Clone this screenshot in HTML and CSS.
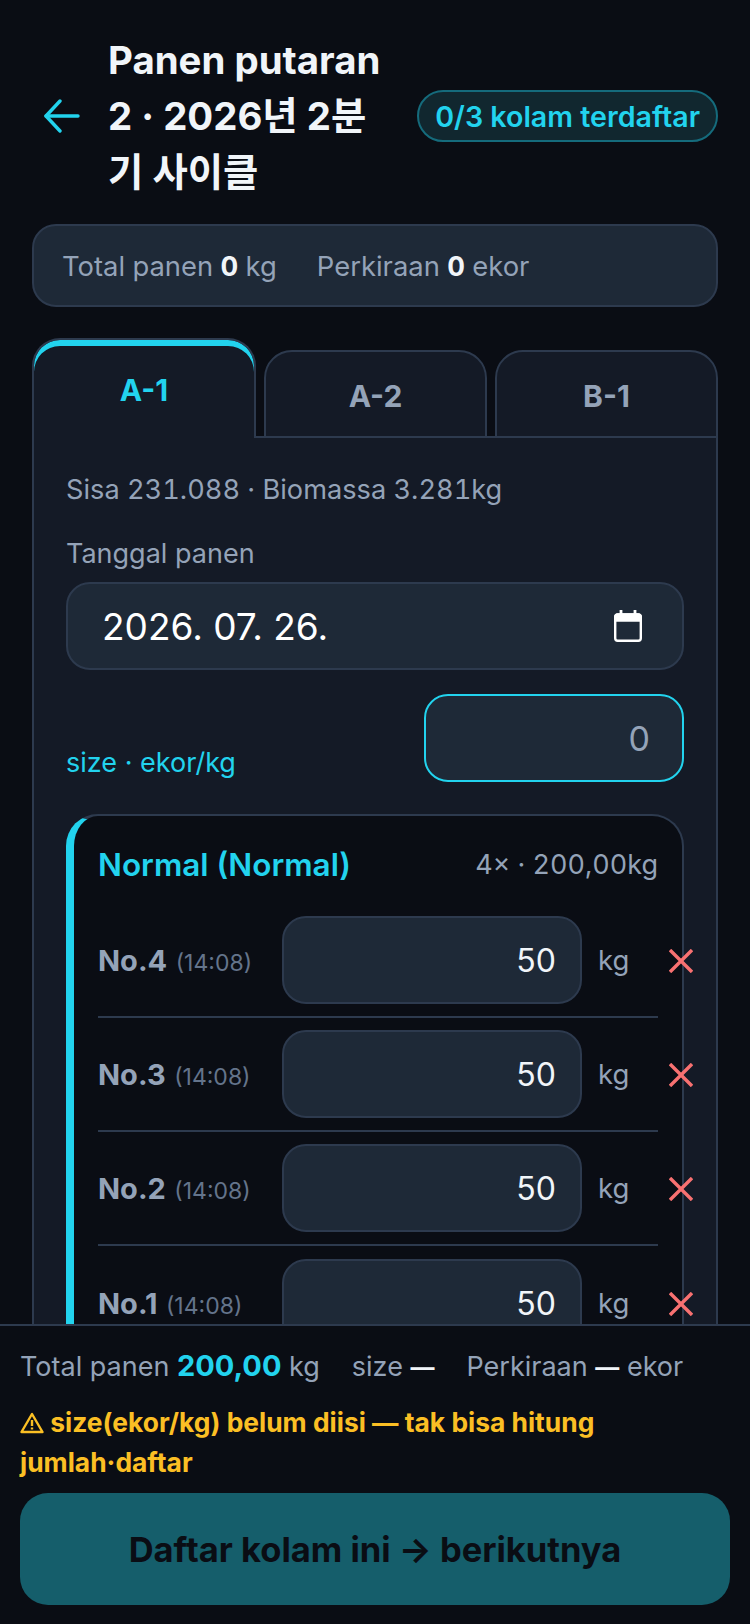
FILE: index.html
```html
<!DOCTYPE html>
<html lang="id">
<head>
    <meta charset="UTF-8">
    <meta name="viewport" content="width=device-width, initial-scale=1.0">
    <title>Panen putaran</title>
    <link rel="stylesheet" href="styles.css">
</head>
<body>
    <main class="content">
        <header class="top">
            <svg class="back" viewBox="0 0 36 36" width="36" height="36" fill="none" stroke="#22d3ee" stroke-width="3.4" stroke-linecap="round" stroke-linejoin="round">
                <path d="M34 18H2"/>
                <path d="M16 3 2 18l14 15"/>
            </svg>
            <h1>Panen putaran 2 · 2026년 2분기 사이클</h1>
            <span class="badge">0/3 kolam terdaftar</span>
        </header>

        <div class="summary">
            <span>Total panen <b>0</b> kg</span>
            <span>Perkiraan <b>0</b> ekor</span>
        </div>

        <div class="tabs">
            <div class="tab active">A-1</div>
            <div class="tab">A-2</div>
            <div class="tab">B-1</div>
        </div>

        <section class="panel">
            <p class="stock">Sisa 231.088 · Biomassa 3.281kg</p>
            <label class="date-label">Tanggal panen</label>
            <div class="field date-field">
                <span>2026. 07. 26.</span>
                <svg viewBox="0 0 28 32" width="28" height="32" fill="none">
                    <rect x="1.2" y="4.5" width="25.6" height="26.3" rx="2.5" stroke="#fff" stroke-width="2.4"/>
                    <path d="M1.2 7a2.500 2.500 0 0 1 2.500-2.500h20.600A2.500 2.500 0 0 1 26.800 7v3.500H1.200z" fill="#fff" stroke="#fff" stroke-width="2.400"/>
                    <path d="M7 0v5M21 0v5" stroke="#fff" stroke-width="2.800"/>
                </svg>
            </div>

            <div class="size-row">
                <label>size · ekor/kg</label>
                <div class="field size-field">0</div>
            </div>

            <div class="group">
                <div class="group-head">
                    <span class="group-name">Normal (Normal)</span>
                    <span class="group-total">4× · 200,00kg</span>
                </div>

                <div class="row">
                    <span class="row-name"><b>No.4</b> <small>(14:08)</small></span>
                    <div class="field kg-field">50</div>
                    <span class="unit">kg</span>
                    <svg class="del" viewBox="0 0 24 24" width="24" height="24" stroke="#f87171" stroke-width="3.4"><path d="M1 1l22 22M23 1 1 23"/></svg>
                </div>
                <div class="row">
                    <span class="row-name"><b>No.3</b> <small>(14:08)</small></span>
                    <div class="field kg-field">50</div>
                    <span class="unit">kg</span>
                    <svg class="del" viewBox="0 0 24 24" width="24" height="24" stroke="#f87171" stroke-width="3.4"><path d="M1 1l22 22M23 1 1 23"/></svg>
                </div>
                <div class="row">
                    <span class="row-name"><b>No.2</b> <small>(14:08)</small></span>
                    <div class="field kg-field">50</div>
                    <span class="unit">kg</span>
                    <svg class="del" viewBox="0 0 24 24" width="24" height="24" stroke="#f87171" stroke-width="3.4"><path d="M1 1l22 22M23 1 1 23"/></svg>
                </div>
                <div class="row">
                    <span class="row-name"><b>No.1</b> <small>(14:08)</small></span>
                    <div class="field kg-field">50</div>
                    <span class="unit">kg</span>
                    <svg class="del" viewBox="0 0 24 24" width="24" height="24" stroke="#f87171" stroke-width="3.4"><path d="M1 1l22 22M23 1 1 23"/></svg>
                </div>
            </div>
        </section>
    </main>

    <footer class="bottom">
        <div class="totals">
            <span>Total panen <b class="cyan">200,00</b> kg</span>
            <span>size <b>—</b></span>
            <span>Perkiraan <b>—</b> ekor</span>
        </div>
        <p class="warn">
            <svg viewBox="0 0 24 22" width="24" height="22" fill="none" stroke="#fbbf24" stroke-width="2.4" stroke-linejoin="round"><path d="M12 2 1.500 20h21z"/><path d="M12 8v6M12 15.500v2"/></svg>
            size(ekor/kg) belum diisi — tak bisa hitung jumlah·daftar
        </p>
        <button class="submit">Daftar kolam ini → berikutnya</button>
    </footer>
</body>
</html>
```

FILE: styles.css
```css
* {
    box-sizing: border-box;
}

html, body {
    height: 100%;
}

body {
    margin: 0;
    height: 1624px;
    display: flex;
    flex-direction: column;
    overflow: hidden;
    background-color: #0a0d14;
    color: #f1f5f9;
    font-family: Inter, "Noto Sans CJK KR", sans-serif;
}

.content {
    flex: 1;
    min-height: 0;
    overflow: hidden;
    padding: 32px 32px 0;
}

.top {
    display: flex;
    align-items: center;
}

.back {
    flex: none;
    margin-left: 12px;
    margin-right: 28px;
}

h1 {
    flex: 1;
    margin: 0;
    padding-right: 20px;
    font-size: 38.4px;
    line-height: 56px;
    font-weight: 700;
    color: #f1f5f9;
    word-break: break-all;
}

.badge {
    flex: none;
    height: 52px;
    padding: 0 16px;
    display: flex;
    align-items: center;
    border: 2px solid #156b7c;
    border-radius: 26px;
    background-color: #11272f;
    color: #22d3ee;
    font-size: 28.6px;
    font-weight: 600;
}

.summary {
    margin-top: 24px;
    height: 83px;
    padding: 0 28px;
    display: flex;
    align-items: center;
    gap: 40px;
    background-color: #1e2937;
    border: 2px solid #2d3a4e;
    border-radius: 24px;
    color: #94a3b8;
    font-size: 27.4px;
    font-variant-numeric: tabular-nums;
}

.summary b {
    color: #f1f5f9;
}

.tabs {
    margin-top: 31px;
    display: flex;
    align-items: flex-end;
    gap: 8px;
}

.tab {
    flex: 1;
    height: 88px;
    margin-bottom: -2px;
    padding-top: 3px;
    display: flex;
    align-items: center;
    justify-content: center;
    background-color: #141a26;
    border: 2px solid #2d3a4e;
    border-radius: 28px 28px 0 0;
    color: #94a3b8;
    font-size: 30px;
    font-weight: 700;
}

.tab.active {
    flex: 0 0 224px;
    height: 100px;
    padding: 4px 0 3px;
    border-bottom: none;
    box-shadow: inset 0 6px 0 #22d3ee;
    color: #22d3ee;
    position: relative;
    z-index: 1;
}

.panel {
    padding: 0 32px;
    height: 1000px;
    background-color: #141a26;
    border: 2px solid #2d3a4e;
}

.stock {
    margin: 36px 0 0;
    font-size: 27.2px;
    line-height: 32px;
    color: #94a3b8;
    font-variant-numeric: tabular-nums;
}

.date-label {
    display: block;
    margin-top: 32px;
    font-size: 27px;
    line-height: 32px;
    color: #94a3b8;
}

.field {
    height: 88px;
    display: flex;
    align-items: center;
    background-color: #1e2937;
    border: 2px solid #2d3a4e;
    border-radius: 24px;
    font-size: 32px;
    color: #f1f5f9;
}

.date-field {
    margin-top: 12px;
    padding: 0 40px 0 34px;
    justify-content: space-between;
    font-size: 37px;
    color: #fff;
}

.size-row {
    margin-top: 24px;
    display: flex;
    align-items: flex-end;
    justify-content: space-between;
}

.size-row label {
    font-size: 27px;
    line-height: 32px;
    padding-bottom: 3px;
    color: #22d3ee;
}

.size-field {
    width: 260px;
    padding: 0 32px;
    justify-content: flex-end;
    border-color: #22d3ee;
    font-size: 34px;
    color: #94a3b8;
}

.group {
    margin-top: 32px;
    padding: 0 24px;
    background-color: #0a0d14;
    border: 2px solid #2d3a4e;
    border-left: 8px solid #22d3ee;
    border-radius: 32px;
}

.group-head {
    height: 88px;
    display: flex;
    align-items: center;
    justify-content: space-between;
    padding-top: 8px;
}

.group-name {
    font-size: 31.5px;
    font-weight: 600;
    color: #22d3ee;
}

.group-total {
    font-size: 27px;
    color: #94a3b8;
    font-variant-numeric: tabular-nums;
}

.row {
    height: 114px;
    display: flex;
    align-items: center;
    border-bottom: 2px solid #2d3a4e;
}

.row:last-child {
    border-bottom: none;
}

.row-name {
    width: 184px;
    flex: none;
    white-space: nowrap;
}

.row-name b {
    font-size: 29px;
    font-weight: 700;
    color: #94a3b8;
}

.row-name small {
    margin-left: 4px;
    font-size: 23px;
    color: #64748b;
}

.kg-field {
    flex: none;
    width: 300px;
    padding: 0 24px;
    justify-content: flex-end;
}

.unit {
    flex: none;
    width: 87px;
    padding-left: 16px;
    font-size: 27.5px;
    color: #94a3b8;
}

.del {
    flex: none;
    margin-top: 2px;
}

.bottom {
    flex: none;
    height: 300px;
    padding: 24px 20px 0;
    background-color: #0a0d14;
    border-top: 2px solid #2d3a4e;
    position: relative;
    z-index: 2;
}

.totals {
    display: flex;
    align-items: baseline;
    gap: 32px;
    font-size: 27px;
    line-height: 32px;
    color: #94a3b8;
    white-space: nowrap;
}

.totals b {
    font-size: 24px;
    color: #f1f5f9;
}

.totals .cyan {
    font-size: 29px;
    color: #22d3ee;
}

.warn {
    margin: 18px 0 0;
    font-size: 26.4px;
    line-height: 40px;
    font-weight: 700;
    color: #fbbf24;
}

.warn svg {
    vertical-align: -2px;
}

.submit {
    display: block;
    width: 710px;
    height: 112px;
    margin-top: 11px;
    border: none;
    border-radius: 28px;
    background-color: #155e6b;
    color: #0a0d14;
    font-family: inherit;
    font-size: 34.5px;
    font-weight: 700;
}
```
